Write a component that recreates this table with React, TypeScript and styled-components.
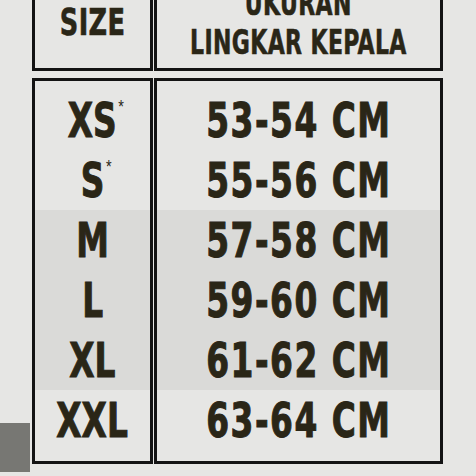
import styled, { createGlobalStyle } from "styled-components"

const GlobalStyle = createGlobalStyle`
  html, body {
    margin: 0;
    padding: 0;
    background: #e6e6e4;
    overflow: hidden;
  }
`

const ink = "#2a2617"
const line = "#131313"
const condensed = `"Liberation Sans Narrow", "DejaVu Sans Condensed", "Liberation Sans", sans-serif`

const Page = styled.div`
  position: relative;
  width: 476px;
  height: 476px;
  overflow: hidden;
  background: #e6e6e4;
`

const Sheet = styled.div`
  width: 411px;
  margin: -26px 0 0 32px;
  display: flex;
  flex-direction: column;
  gap: 7px;
`

const Table = styled.div`
  display: grid;
  grid-template-columns: 121px 289px;
  gap: 1px;
`

const HeadCell = styled.div`
  height: 91px;
  min-width: 0;
  border: 3px solid ${line};
  display: flex;
  flex-direction: column;
  align-items: center;
  justify-content: center;
  overflow: hidden;
  color: ${ink};
  font-family: ${condensed};
  font-weight: 700;
  -webkit-text-stroke: 0.6px ${ink};
`

const HeadText = styled.span<{ $size: number; $squeeze: number }>`
  display: inline-block;
  font-size: ${p => p.$size}px;
  line-height: 39px;
  letter-spacing: 0.5px;
  transform: scaleX(${p => p.$squeeze});
  white-space: nowrap;
`

const BodyCell = styled.div`
  min-width: 0;
  border: 3px solid ${line};
  padding: 9px 0 11px;
  display: flex;
  flex-direction: column;
`

const Row = styled.div<{ $shade?: boolean }>`
  height: 60px;
  display: flex;
  align-items: center;
  justify-content: center;
  background: ${p => (p.$shade ? "#dadad8" : "transparent")};
  color: ${ink};
  font-family: ${condensed};
  font-weight: 700;
  font-size: 48px;
  line-height: 1;
  -webkit-text-stroke: 1px ${ink};
`

const Label = styled.span`
  position: relative;
  display: inline-block;
  transform: scaleX(0.76);
`

const Star = styled.span`
  position: absolute;
  left: 100%;
  top: 1px;
  margin-left: 2px;
  font-family: "Liberation Sans", sans-serif;
  font-weight: 400;
  font-size: 19px;
  -webkit-text-stroke: 0;
`

const Measure = styled.span`
  display: inline-block;
  letter-spacing: 2px;
  white-space: nowrap;
  transform: scaleX(0.76);
`

const Corner = styled.div`
  position: absolute;
  left: 0;
  top: 423px;
  width: 30px;
  height: 49px;
  background: #777773;
`

const rows = [
  { size: "XS", star: true, cm: "53-54 CM" },
  { size: "S", star: true, cm: "55-56 CM" },
  { size: "M", shade: true, cm: "57-58 CM" },
  { size: "L", shade: true, cm: "59-60 CM" },
  { size: "XL", shade: true, cm: "61-62 CM" },
  { size: "XXL", cm: "63-64 CM" },
]

export default function App() {
  return (
    <Page>
      <GlobalStyle />
      <Sheet>
        <Table>
          <HeadCell>
            <HeadText $size={37} $squeeze={0.77}>SIZE</HeadText>
          </HeadCell>
          <HeadCell>
            <HeadText $size={34} $squeeze={0.72}>UKURAN</HeadText>
            <HeadText $size={34} $squeeze={0.72}>LINGKAR KEPALA</HeadText>
          </HeadCell>
        </Table>

        <Table>
          <BodyCell>
            {rows.map(r => (
              <Row key={r.size} $shade={r.shade}>
                <Label>
                  {r.size}
                  {r.star && <Star>*</Star>}
                </Label>
              </Row>
            ))}
          </BodyCell>
          <BodyCell>
            {rows.map(r => (
              <Row key={r.cm} $shade={r.shade}>
                <Measure>{r.cm}</Measure>
              </Row>
            ))}
          </BodyCell>
        </Table>
      </Sheet>
      <Corner />
    </Page>
  )
}
